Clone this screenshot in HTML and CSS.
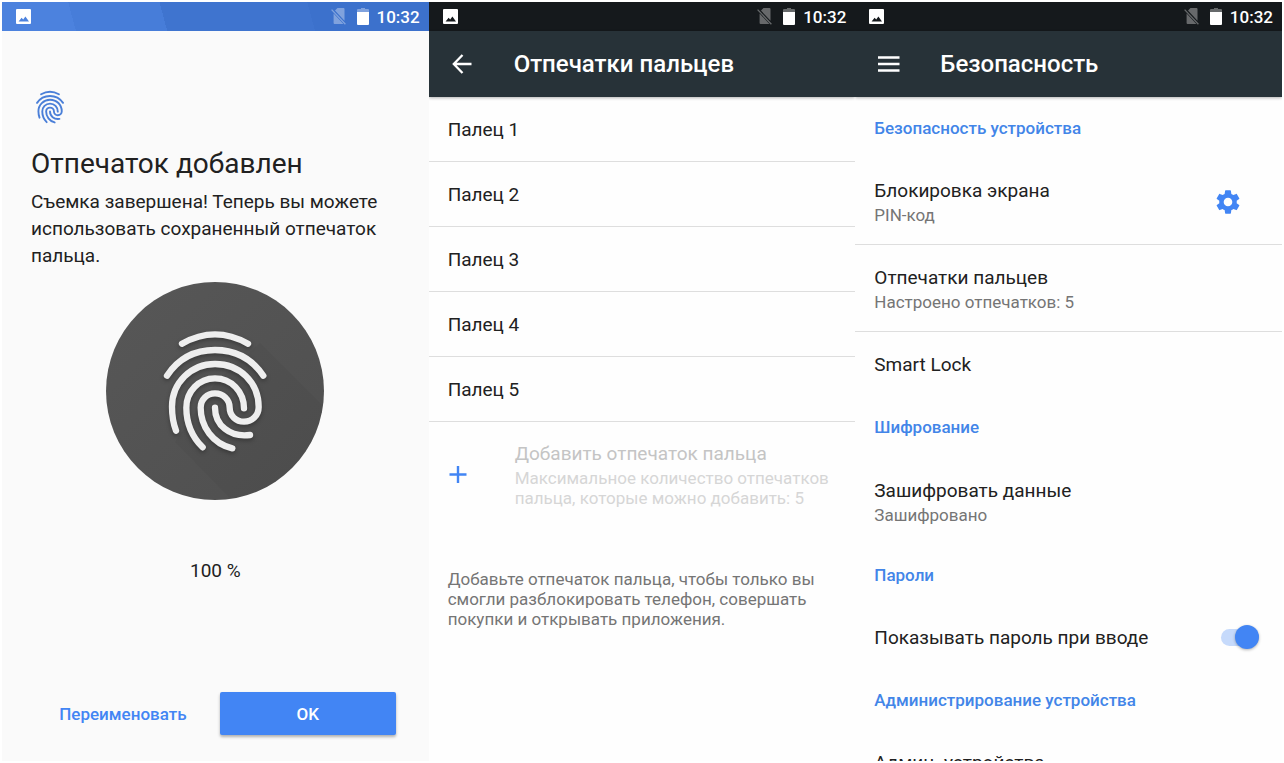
FILE: index.html
```html
<!DOCTYPE html>
<html lang="ru">
<head>
    <meta charset="UTF-8">
    <meta name="viewport" content="width=device-width, initial-scale=1.0">
    <title>Отпечатки пальцев</title>
    <link rel="stylesheet" href="styles.css">
</head>
<body>

    <!-- Shared icons -->
    <svg class="sprite" aria-hidden="true">
        <symbol id="icon-image" viewBox="0 0 15 15">
            <path fill="currentColor" fill-rule="evenodd" d="M1 0h13q1 0 1 1v13q0 1-1 1H1q-1 0-1-1V1q0-1 1-1zM2.600 12.400h10.400L9.400 7.600 7.200 10.400 5.600 8.800z"/>
        </symbol>
        <symbol id="icon-no-sim" viewBox="0 0 15 17">
            <path fill="currentColor" d="M6.500 0h6q1 0 1 1v11.800L4 2.600zM2.600 5.400 12.400 16H3.600q-1 0-1-1z"/>
            <path fill="none" stroke="currentColor" stroke-width="1.300" d="M.6 1.600 14.400 16.200"/>
        </symbol>
        <symbol id="icon-battery" viewBox="0 0 12 17">
            <path fill="currentColor" opacity=".35" d="M4 0h4v1h3q1 0 1 1v2H0V2q0-1 1-1h3z"/>
            <path fill="currentColor" d="M0 4h12v12q0 1-1 1H1q-1 0-1-1z"/>
        </symbol>
        <symbol id="icon-fingerprint" viewBox="205 165 312 366">
            <g fill="none" stroke="currentColor" stroke-linecap="round">
                <path d="M262 206Q361 150 460 206"/>
                <path d="M217 302C250 252 300 225 361 225S472 252 506 302"/>
                <path d="M244 467C234 440 232 420 232 395C232 323 290 267 361 267C435 267 492 322 492 396C492 422 472 440 448 440C424 440 405 422 405 398C405 374 385 355 361 355C337 355 318 374 318 398C318 455 355 507 413 520"/>
                <path d="M324 517C292 485 275 445 275 398C275 350 312 310 361 310C410 310 448 350 448 400"/>
                <path d="M361 398C361 450 405 488 466 480"/>
            </g>
        </symbol>
    </svg>

    <!-- Fingerprint added -->
    <section class="screen screen-done">
        <div class="status-bar status-blue">
            <svg class="status-image"><use href="#icon-image"/></svg>
            <svg class="status-sim"><use href="#icon-no-sim"/></svg>
            <svg class="status-battery"><use href="#icon-battery"/></svg>
            <span>10:32</span>
        </div>
        <div class="done-content">
            <svg class="small-print"><use href="#icon-fingerprint"/></svg>
            <h1>Отпечаток добавлен</h1>
            <p>Съемка завершена! Теперь вы можете использовать сохраненный отпечаток пальца.</p>
            <div class="print-circle">
                <svg class="circle-shade" viewBox="0 0 218 218">
                    <path d="M154 61 250 157 157 250 69 160 110 100z"/>
                </svg>
                <svg class="big-print"><use href="#icon-fingerprint"/></svg>
            </div>
            <p class="percent">100 %</p>
        </div>
        <div class="actions">
            <button class="btn-flat" type="button">Переименовать</button>
            <button class="btn-primary" type="button">OK</button>
        </div>
    </section>

    <!-- Fingerprint list -->
    <section class="screen">
        <div class="status-bar">
            <svg class="status-image"><use href="#icon-image"/></svg>
            <svg class="status-sim"><use href="#icon-no-sim"/></svg>
            <svg class="status-battery"><use href="#icon-battery"/></svg>
            <span>10:32</span>
        </div>
        <header class="app-bar">
            <button class="icon-btn" type="button" aria-label="Назад">
                <svg viewBox="0 0 28 28"><path fill="none" stroke="currentColor" stroke-width="2.300" d="M23.500 14H6M14.500 5 5.800 14l8.700 9"/></svg>
            </button>
            <h2>Отпечатки пальцев</h2>
        </header>
        <ul class="finger-list">
            <li><a class="row" href="#">Палец 1</a></li>
            <li><a class="row" href="#">Палец 2</a></li>
            <li><a class="row" href="#">Палец 3</a></li>
            <li><a class="row" href="#">Палец 4</a></li>
            <li><a class="row" href="#">Палец 5</a></li>
        </ul>
        <button class="add-row" type="button" disabled>
            <svg viewBox="0 0 18 18"><path fill="none" stroke="currentColor" stroke-width="2.400" d="M9 0v17M.5 8.500h17"/></svg>
            <span class="add-text">
                <span class="add-title">Добавить отпечаток пальца</span>
                <span class="add-note">Максимальное количество отпечатков пальца, которые можно добавить: 5</span>
            </span>
        </button>
        <p class="hint">Добавьте отпечаток пальца, чтобы только вы смогли разблокировать телефон, совершать покупки и открывать приложения.</p>
    </section>

    <!-- Security settings -->
    <section class="screen">
        <div class="status-bar">
            <svg class="status-image"><use href="#icon-image"/></svg>
            <svg class="status-sim"><use href="#icon-no-sim"/></svg>
            <svg class="status-battery"><use href="#icon-battery"/></svg>
            <span>10:32</span>
        </div>
        <header class="app-bar">
            <button class="icon-btn" type="button" aria-label="Меню">
                <svg viewBox="0 0 28 28"><path fill="none" stroke="currentColor" stroke-width="2.400" d="M4 7.500h21.500M4 14h21.500M4 20.500h21.500"/></svg>
            </button>
            <h2>Безопасность</h2>
        </header>

        <h3>Безопасность устройства</h3>
        <div class="row row-tall divided">
            <a class="row-text" href="#">Блокировка экрана <small>PIN-код</small></a>
            <button class="gear-btn" type="button" aria-label="Настройки блокировки">
                <svg viewBox="0 0 24 24"><path fill="currentColor" d="M19.430 12.980c.04-.32.07-.64.07-.98s-.03-.66-.07-.98l2.110-1.650c.19-.15.24-.42.12-.64l-2-3.460c-.12-.22-.39-.3-.61-.22l-2.490 1c-.52-.4-1.080-.73-1.690-.98l-.38-2.650A.488.488 0 0 0 14 2h-4c-.25 0-.46.18-.49.42l-.38 2.650c-.61.25-1.170.59-1.690.98l-2.490-1c-.23-.09-.49 0-.61.22l-2 3.460c-.13.22-.07.49.12.64l2.110 1.650c-.04.32-.07.65-.07.98s.03.66.07.98l-2.110 1.650c-.19.15-.24.42-.12.64l2 3.460c.12.22.39.3.61.22l2.490-1c.52.4 1.080.73 1.690.98l.38 2.650c.03.24.24.42.49.42h4c.25 0 .46-.18.49-.42l.38-2.650c.61-.25 1.170-.59 1.690-.98l2.490 1c.23.09.49 0 .61-.22l2-3.460c.12-.22.07-.49-.12-.64zM12 15.700a3.700 3.700 0 1 1 0-7.400 3.700 3.700 0 0 1 0 7.400z"/></svg>
            </button>
        </div>
        <div class="row row-tall divided">
            <a class="row-text" href="#">Отпечатки пальцев <small>Настроено отпечатков: 5</small></a>
        </div>
        <div class="row">
            <a class="row-text" href="#">Smart Lock</a>
        </div>

        <h3>Шифрование</h3>
        <div class="row row-tall">
            <a class="row-text" href="#">Зашифровать данные <small>Зашифровано</small></a>
        </div>

        <h3>Пароли</h3>
        <div class="row">
            <label class="row-text" for="showPassword">Показывать пароль при вводе</label>
            <input class="switch" type="checkbox" id="showPassword" checked>
        </div>

        <h3>Администрирование устройства</h3>
        <div class="row">
            <a class="row-text" href="#">Админ. устройства</a>
        </div>
    </section>

</body>
</html>
```
FILE: styles.css
```css
/* Basic Reset */
* {
    margin: 0;
    padding: 0;
    box-sizing: border-box;
}

body {
    font-family: Roboto, 'Noto Sans', sans-serif;
    font-size: 19px;
    background-color: #fff;
    color: #212121;
    display: grid;
    grid-template-columns: repeat(3, 1fr);
    grid-template-rows: minmax(0, 1fr);
    height: 100vh;
    padding: 2px;
    overflow: hidden;
}

a {
    color: inherit;
    text-decoration: none;
}

button {
    font-family: inherit;
    border: none;
    background: none;
    cursor: pointer;
}

svg {
    display: block;
    flex: none;
}

.sprite {
    position: absolute;
    width: 0;
    height: 0;
}

.screen {
    display: flex;
    flex-direction: column;
    min-width: 0;
    overflow: hidden;
    background-color: #fefefe;
}

.screen > * {
    flex: none;
}

/* Status bar */
.status-bar {
    display: flex;
    align-items: center;
    height: 29px;
    padding: 0 9px 0 14px;
    background-color: #15191c;
    color: #fff;
    font-size: 17px;
    font-weight: 500;
}

.status-blue {
    background: linear-gradient(75deg, #4c82de 0 17%, #477dd9 17% 38%, #3f74cf 38% 72%, #3c71cc 72%);
}

.status-image {
    width: 15px;
    height: 15px;
    margin-right: auto;
}

.status-sim {
    width: 15px;
    height: 17px;
    margin-right: 11px;
    opacity: 0.35;
}

.status-battery {
    width: 12px;
    height: 17px;
    margin-right: 8px;
}

/* App bar */
.app-bar {
    display: flex;
    align-items: center;
    gap: 38px;
    height: 66px;
    padding: 0 19px;
    background-color: #273238;
    color: #fff;
    box-shadow: 0 1px 3px rgba(0, 0, 0, 0.3);
}

.app-bar h2 {
    font-size: 24px;
    font-weight: 500;
}

.icon-btn,
.icon-btn svg {
    width: 28px;
    height: 28px;
    color: #fff;
}

/* Fingerprint added */
.screen-done {
    background-color: #fafafa;
}

.done-content {
    padding: 59px 29px 0;
}

.small-print {
    width: 28px;
    height: 34px;
    margin-left: 5px;
    color: #4a7fd8;
    stroke-width: 21;
}

.done-content h1 {
    margin-top: 22px;
    font-size: 28px;
    font-weight: 400;
    line-height: 36px;
}

.done-content p {
    margin-top: 6px;
    line-height: 27px;
}

.print-circle {
    display: grid;
    place-items: center;
    width: 218px;
    height: 218px;
    margin: 13px auto 0;
    border-radius: 50%;
    background: linear-gradient(135deg, #575757, #4f4f4f);
    overflow: hidden;
}

.print-circle svg {
    grid-area: 1 / 1;
}

.circle-shade {
    width: 218px;
    height: 218px;
    fill: rgba(0, 0, 0, 0.03);
}

.big-print {
    width: 104px;
    height: 122px;
    color: #eee;
    stroke-width: 19;
    filter: drop-shadow(0 2px 2px rgba(0, 0, 0, 0.3));
}

.done-content .percent {
    margin-top: 57px;
    text-align: center;
}

.actions {
    display: flex;
    gap: 9px;
    margin-top: auto;
    padding: 0 33px 26px;
}

.actions button {
    flex: 1;
    height: 43px;
    border-radius: 2px;
    font-size: 17px;
    font-weight: 500;
}

.btn-flat {
    color: #4285f4;
}

.actions .btn-primary {
    background-color: #4285f4;
    color: #fff;
    box-shadow: 0 2px 3px rgba(0, 0, 0, 0.3);
}

/* Rows */
.row {
    display: flex;
    align-items: center;
    height: 64px;
    padding: 0 19px;
}

.row-tall {
    height: 87px;
    padding-top: 2px;
}

.finger-list .row {
    height: 65px;
}

.divided,
.finger-list .row {
    border-bottom: 1px solid #dedede;
}

.row-text {
    flex: 1;
}

.row-text small {
    display: block;
    margin-top: 3px;
    font-size: 17px;
    line-height: 20px;
    color: #757575;
}

.finger-list {
    list-style: none;
}

.add-row {
    display: flex;
    align-items: center;
    gap: 48px;
    padding: 20px 20px 19px;
    text-align: left;
}

.add-row svg {
    width: 18px;
    height: 18px;
    color: #4285f4;
}

.add-text {
    display: flex;
    flex-direction: column;
    gap: 2px;
}

.add-title {
    font-size: 19px;
    line-height: 24px;
    color: #c4c4c4;
}

.add-note {
    font-size: 17px;
    line-height: 20px;
    color: #d6d6d6;
}

.hint {
    margin-top: 42px;
    padding: 0 19px;
    font-size: 17px;
    line-height: 20px;
    color: #757575;
}

/* Security settings */
h3 {
    padding: 1px 19px 0;
    font-size: 17px;
    font-weight: 500;
    line-height: 60px;
    color: #4285e8;
}

.gear-btn {
    margin-right: 21px;
}

.gear-btn svg {
    width: 28px;
    height: 28px;
    color: #4285f4;
}

.switch {
    appearance: none;
    display: flex;
    align-items: center;
    justify-content: flex-end;
    width: 38px;
    height: 17px;
    margin-right: 4px;
    border-radius: 9px;
    background-color: #c6dafb;
    cursor: pointer;
}

.switch::before {
    content: "";
    flex: none;
    width: 24px;
    height: 24px;
    border-radius: 50%;
    background-color: #4285f4;
    box-shadow: 0 1px 3px rgba(0, 0, 0, 0.3);
}

.switch:not(:checked) {
    justify-content: flex-start;
}

/* Stack the screens on phones */
@media (max-width: 768px) {
    body {
        grid-template-columns: 1fr;
        grid-template-rows: none;
        height: auto;
        overflow: auto;
    }

    .actions {
        margin-top: 40px;
    }
}
```
